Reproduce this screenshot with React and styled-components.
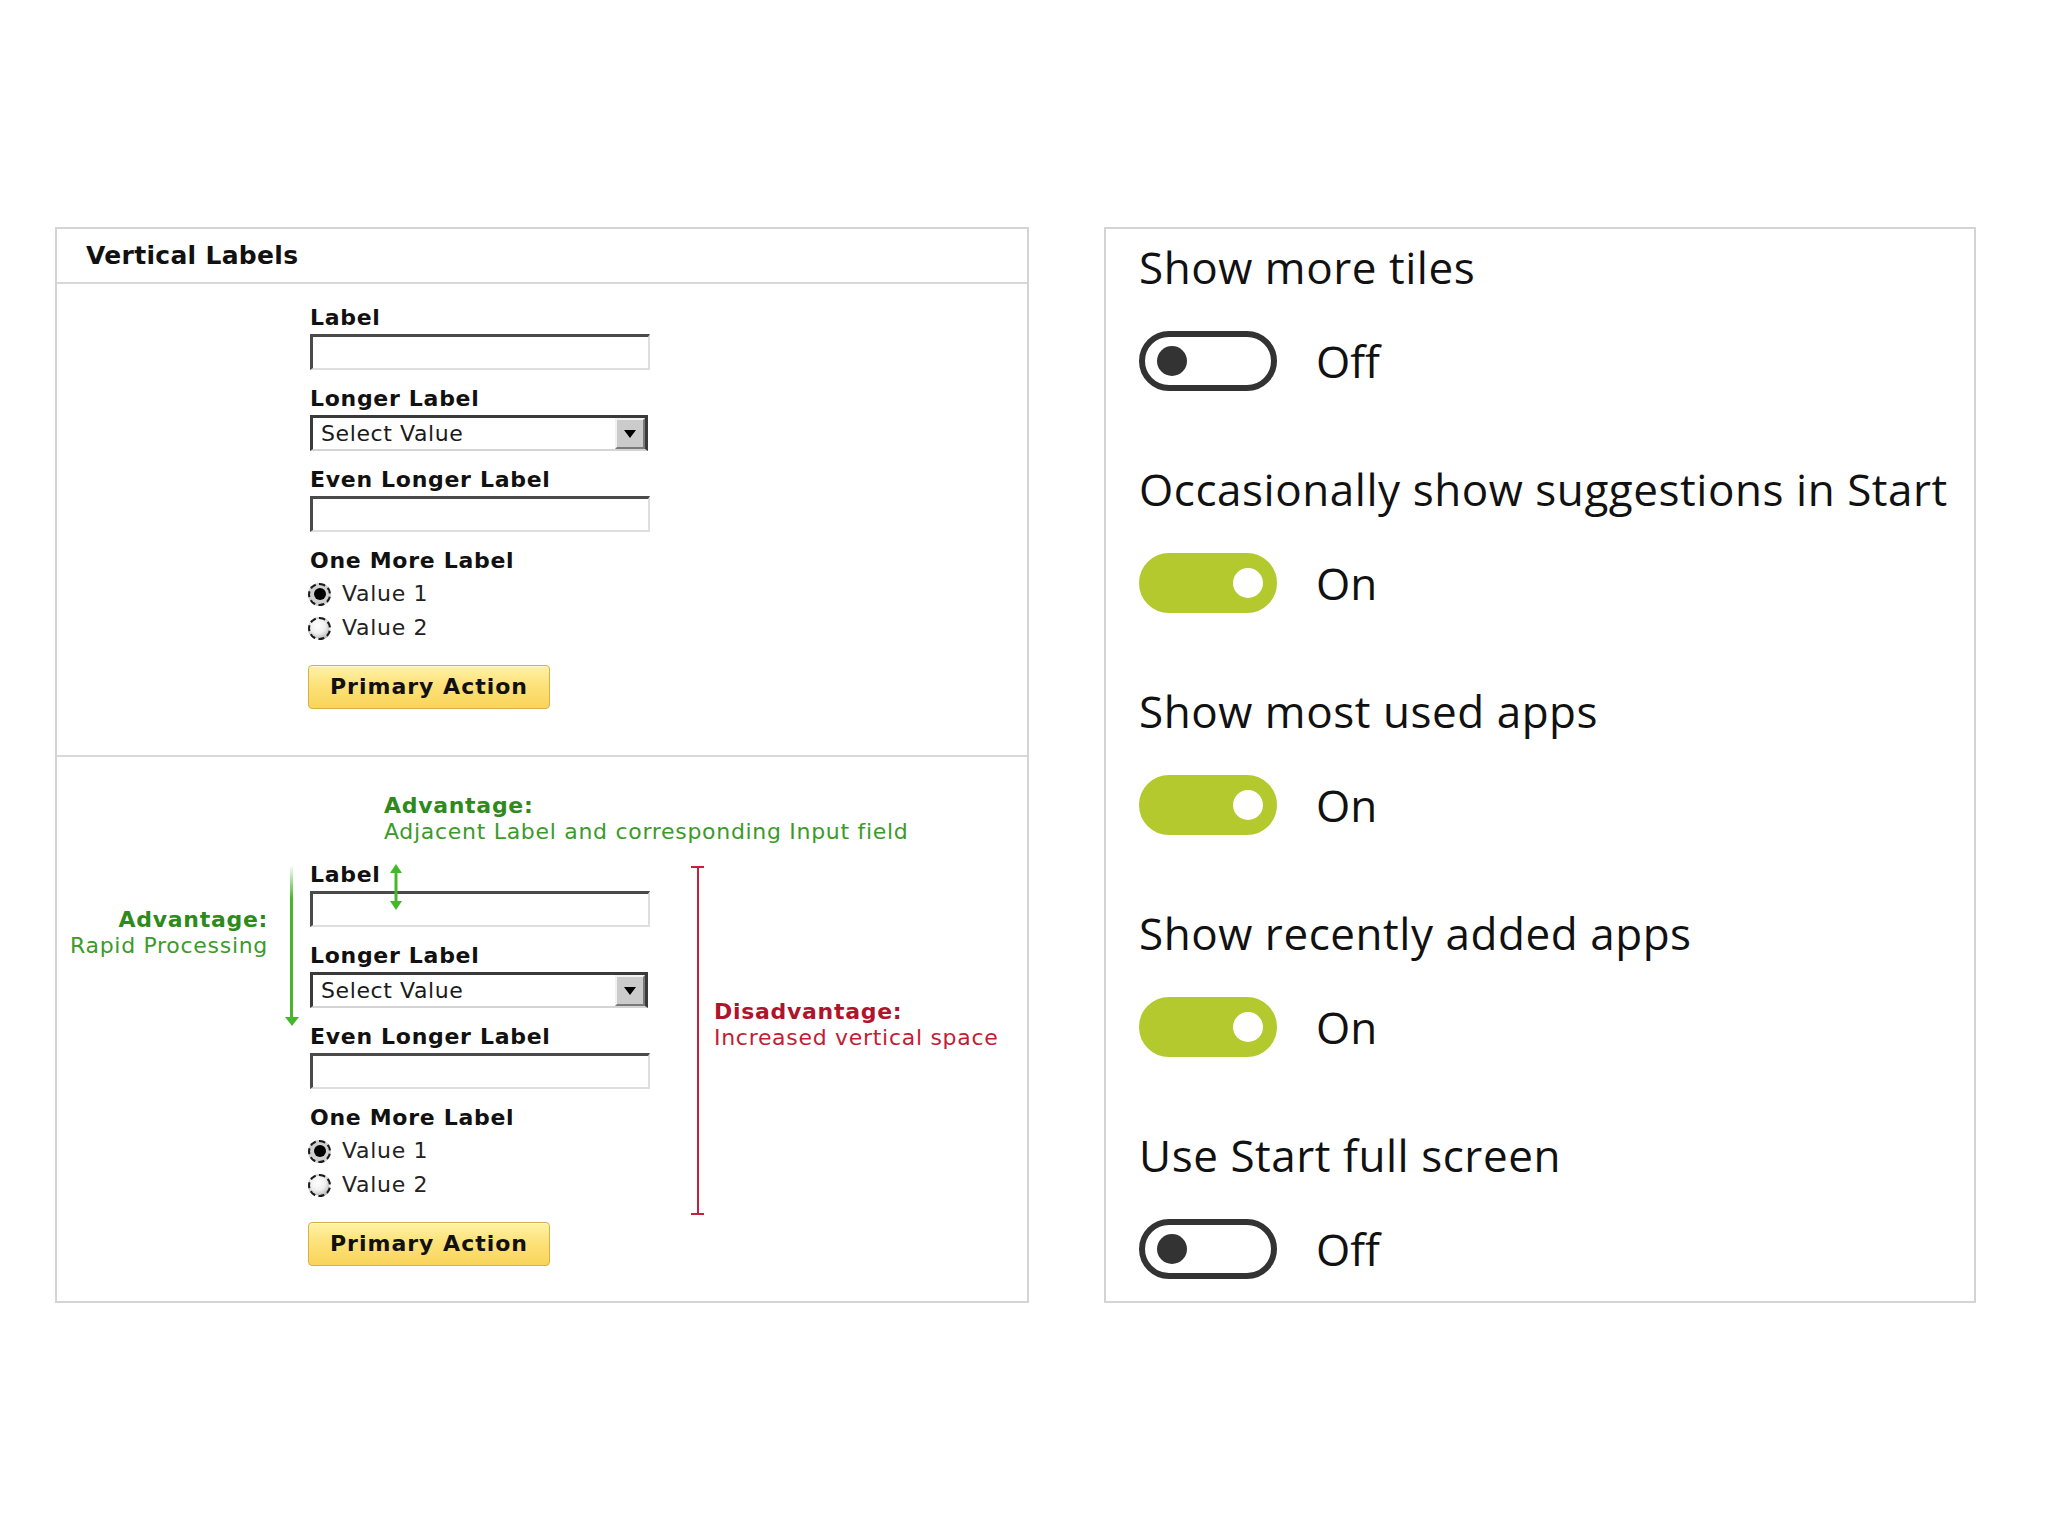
import React from 'react';
import styled, { createGlobalStyle } from 'styled-components';

const Global = createGlobalStyle`
  html, body { margin: 0; padding: 0; background: #fff; }
  body { width: 2048px; height: 1536px; font-family: "DejaVu Sans", Verdana, sans-serif; }
  * { box-sizing: border-box; }
`;

const Page = styled.div`
  display: flex;
  align-items: flex-start;
  gap: 75px;
  padding: 227px 0 0 55px;
  width: 2048px;
  height: 1536px;
`;

const LeftPanel = styled.section`
  width: 974px;
  height: 1076px;
  border: 2px solid #d4d4d4;
  display: flex;
  flex-direction: column;
`;

const PanelHeader = styled.div`
  height: 55px;
  border-bottom: 2px solid #d8d8d8;
  padding-left: 29px;
  display: flex;
  align-items: center;
  font: bold 25px/1 "DejaVu Sans", Verdana, sans-serif;
  letter-spacing: 0.3px;
  color: #111;
`;

const TopSection = styled.div`
  padding: 22px 0 46px 253px;
  border-bottom: 2px solid #d8d8d8;
`;

const BottomSection = styled.div`
  flex: 1;
  padding-top: 36px;
  display: grid;
  grid-template-columns: 211px 42px 340px 41px 13px 10px 1fr;
  grid-template-rows: auto auto;
  align-content: start;
  row-gap: 18px;
`;

const FormColumn = styled.div`
  position: relative;
  width: 340px;
  display: flex;
  flex-direction: column;
  align-items: flex-start;
`;

const FieldLabel = styled.div`
  font: bold 22px/24px "DejaVu Sans", Verdana, sans-serif;
  letter-spacing: 0.7px;
  color: #111;
  margin-bottom: 4px;
  white-space: nowrap;
`;

const TextBox = styled.div`
  width: 340px;
  height: 36px;
  margin-bottom: 17px;
  background: #fff;
  border-top: 3px solid #4a4a4a;
  border-left: 3px solid #4a4a4a;
  border-right: 2px solid #dedede;
  border-bottom: 2px solid #dedede;
`;

const SelectBox = styled.div`
  width: 338px;
  height: 36px;
  margin-bottom: 17px;
  display: flex;
  align-items: stretch;
  border-top: 3px solid #3a3a3a;
  border-left: 3px solid #3a3a3a;
  border-right: 3px solid #3a3a3a;
  border-bottom: 2px solid #d4d4d4;
  background: #fff;
`;

const SelectText = styled.div`
  flex: 1;
  padding-left: 8px;
  display: flex;
  align-items: center;
  font: 22px/1 "DejaVu Sans", Verdana, sans-serif;
  letter-spacing: 0.6px;
  color: #1a1a1a;
`;

const SelectArrow = styled.div`
  width: 30px;
  display: flex;
  align-items: center;
  justify-content: center;
  background: #cbcbcb;
  border: 2px solid;
  border-color: #f2f2f2 #7a7a7a #7a7a7a #f2f2f2;
  &::after {
    content: "";
    border-left: 6px solid transparent;
    border-right: 6px solid transparent;
    border-top: 8px solid #000;
  }
`;

const RadioRow = styled.div`
  height: 34px;
  display: flex;
  align-items: center;
  gap: 11px;
  font: 22px/1 "DejaVu Sans", Verdana, sans-serif;
  letter-spacing: 0.7px;
  color: #222;
  margin-left: -2px;
`;

const RadioDot = styled.span`
  width: 23px;
  height: 23px;
  border-radius: 50%;
  border: 2px dashed #1a1a1a;
  display: flex;
  align-items: center;
  justify-content: center;
  background: ${p => p.$checked
    ? '#d0d0d0'
    : 'radial-gradient(circle at 40% 35%, #ffffff 0%, #f0f0f0 45%, #a0a0a0 100%)'};
  &::after {
    content: "";
    width: 12px;
    height: 12px;
    border-radius: 50%;
    background: ${p => (p.$checked ? '#000' : 'transparent')};
  }
`;

const PrimaryButton = styled.div`
  margin-top: 20px;
  margin-left: -2px;
  width: 242px;
  height: 44px;
  display: flex;
  align-items: center;
  justify-content: center;
  border: 1px solid #d6b04a;
  border-radius: 4px;
  background: linear-gradient(180deg, #fff2a6 0%, #fde27a 45%, #f9d45a 100%);
  font: bold 22px/1 "DejaVu Sans", Verdana, sans-serif;
  letter-spacing: 1px;
  color: #111;
  box-shadow: inset 0 1px 0 #fff8d0;
`;

const TopNote = styled.div`
  grid-column: 3 / -1;
  grid-row: 1;
  padding-left: 74px;
  font: 22px/26px "DejaVu Sans", Verdana, sans-serif;
  letter-spacing: 0.7px;
  white-space: nowrap;
`;

const NoteTitle = styled.div`
  font-weight: bold;
  color: ${p => p.$color};
`;

const NoteText = styled.div`
  color: ${p => p.$color};
`;

const LeftNote = styled.div`
  grid-column: 1;
  grid-row: 2;
  padding-top: 44px;
  text-align: right;
  font: 22px/26px "DejaVu Sans", Verdana, sans-serif;
  letter-spacing: 0.7px;
  white-space: nowrap;
`;

const ArrowCol = styled.div`
  grid-column: 2;
  grid-row: 2;
  padding: 2px 0 0 16px;
  display: flex;
  flex-direction: column;
  align-items: center;
  width: 31px;
`;

const ArrowLine = styled.div`
  width: 3px;
  height: 152px;
  background: linear-gradient(180deg, rgba(68,184,42,0) 0%, #44b82a 22%, #44b82a 100%);
`;

const ArrowHead = styled.div`
  width: 0;
  height: 0;
  border-left: 7px solid transparent;
  border-right: 7px solid transparent;
  border-top: 9px solid #44b82a;
`;

const DoubleArrow = styled.svg`
  position: absolute;
  left: 79px;
  top: 1px;
`;

const BracketCol = styled.div`
  grid-column: 5;
  grid-row: 2;
  padding-top: 3px;
  display: flex;
  flex-direction: column;
  align-items: center;
`;

const BracketCap = styled.div`
  width: 13px;
  height: 2px;
  background: #c8203a;
`;

const BracketLine = styled.div`
  width: 2px;
  height: 345px;
  background: #c8203a;
`;

const DisNote = styled.div`
  grid-column: 7;
  grid-row: 2;
  padding-top: 136px;
  font: 22px/26px "DejaVu Sans", Verdana, sans-serif;
  letter-spacing: 0.7px;
  white-space: nowrap;
`;

const FormArea = styled.div`
  grid-column: 3;
  grid-row: 2;
`;

const RightPanel = styled.section`
  width: 872px;
  height: 1076px;
  border: 2px solid #d4d4d4;
  padding: 8px 0 0 33px;
  display: flex;
  flex-direction: column;
`;

const Setting = styled.div`
  display: flex;
  flex-direction: column;
  margin-bottom: 68px;
`;

const SettingTitle = styled.div`
  font: 400 44px/60px "Open Sans", "Noto Sans", sans-serif;
  color: #111;
  white-space: nowrap;
  margin-bottom: 34px;
  letter-spacing: 0.55px;
`;

const ToggleRow = styled.div`
  height: 60px;
  display: flex;
  align-items: center;
  gap: 39px;
`;

const Track = styled.div`
  width: 138px;
  height: 60px;
  border-radius: 30px;
  display: flex;
  align-items: center;
  justify-content: ${p => (p.$on ? 'flex-end' : 'flex-start')};
  padding: 0 ${p => (p.$on ? '8px' : '12px')};
  border: 6px solid ${p => (p.$on ? '#b3c92d' : '#333333')};
  background: ${p => (p.$on ? '#b3c92d' : '#ffffff')};
`;

const Knob = styled.div`
  width: 30px;
  height: 30px;
  border-radius: 50%;
  background: ${p => (p.$on ? '#ffffff' : '#333333')};
`;

const ToggleText = styled.div`
  font: 400 44px/60px "Open Sans", "Noto Sans", sans-serif;
  color: #111;
`;

function VerticalForm({ annotated }) {
  return (
    <FormColumn>
      {annotated && (
        <DoubleArrow width="14" height="46" viewBox="0 0 14 46">
          <line x1="7" y1="6" x2="7" y2="40" stroke="#44b82a" strokeWidth="3" />
          <polygon points="1,9 7,0 13,9" fill="#44b82a" />
          <polygon points="1,37 7,46 13,37" fill="#44b82a" />
        </DoubleArrow>
      )}
      <FieldLabel>Label</FieldLabel>
      <TextBox />
      <FieldLabel>Longer Label</FieldLabel>
      <SelectBox>
        <SelectText>Select Value</SelectText>
        <SelectArrow />
      </SelectBox>
      <FieldLabel>Even Longer Label</FieldLabel>
      <TextBox />
      <FieldLabel>One More Label</FieldLabel>
      <RadioRow><RadioDot $checked />Value 1</RadioRow>
      <RadioRow><RadioDot />Value 2</RadioRow>
      <PrimaryButton>Primary Action</PrimaryButton>
    </FormColumn>
  );
}

const settings = [
  { title: 'Show more tiles', on: false },
  { title: 'Occasionally show suggestions in Start', on: true },
  { title: 'Show most used apps', on: true },
  { title: 'Show recently added apps', on: true },
  { title: 'Use Start full screen', on: false },
];

export default function App() {
  return (
    <>
      <Global />
      <Page>
        <LeftPanel>
          <PanelHeader>Vertical Labels</PanelHeader>
          <TopSection>
            <VerticalForm />
          </TopSection>
          <BottomSection>
            <TopNote>
              <NoteTitle $color="#2f8a1c">Advantage:</NoteTitle>
              <NoteText $color="#3c9a2a">Adjacent Label and corresponding Input field</NoteText>
            </TopNote>
            <LeftNote>
              <NoteTitle $color="#2f8a1c">Advantage:</NoteTitle>
              <NoteText $color="#3c9a2a">Rapid Processing</NoteText>
            </LeftNote>
            <ArrowCol>
              <ArrowLine />
              <ArrowHead />
            </ArrowCol>
            <FormArea>
              <VerticalForm annotated />
            </FormArea>
            <BracketCol>
              <BracketCap />
              <BracketLine />
              <BracketCap />
            </BracketCol>
            <DisNote>
              <NoteTitle $color="#b0142c">Disadvantage:</NoteTitle>
              <NoteText $color="#c41c34">Increased vertical space</NoteText>
            </DisNote>
          </BottomSection>
        </LeftPanel>
        <RightPanel>
          {settings.map(s => (
            <Setting key={s.title}>
              <SettingTitle>{s.title}</SettingTitle>
              <ToggleRow>
                <Track $on={s.on}><Knob $on={s.on} /></Track>
                <ToggleText>{s.on ? 'On' : 'Off'}</ToggleText>
              </ToggleRow>
            </Setting>
          ))}
        </RightPanel>
      </Page>
    </>
  );
}
